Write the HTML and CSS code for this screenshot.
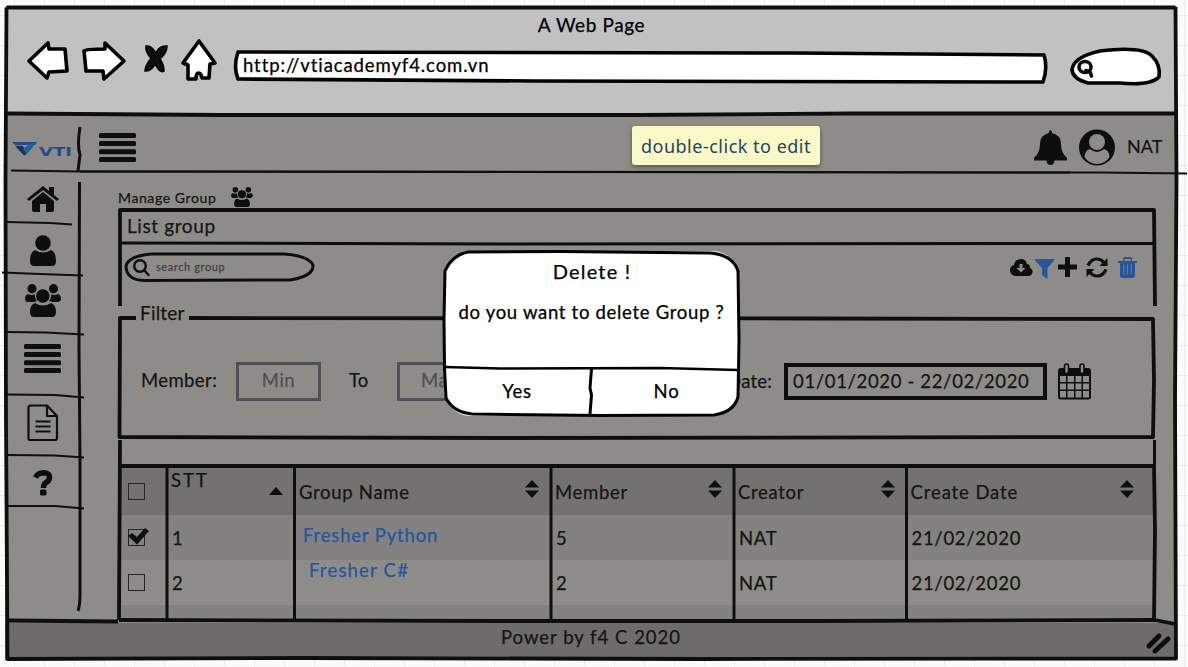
FILE: index.html
```html
<!DOCTYPE html>
<html lang="en">
<head>
<meta charset="utf-8">
<title>Manage Group</title>
<link rel="stylesheet" href="styles.css">
</head>
<body>
<svg class="symbols" width="0" height="0">
  <symbol id="users" viewBox="0 0 36 33">
    <circle cx="7" cy="4.700" r="4.600"/><circle cx="28.500" cy="4.700" r="4.600"/>
    <path d="M3 10Q7 12 9.500 10Q10 15 12 17Q9 18 8 18H3Q0 18 0 15Q0 11 3 10ZM33 10Q29 12 26.500 10Q26 15 24 17Q27 18 28 18H32Q36 18 36 15Q36 11 33 10Z"/>
    <circle cx="17.800" cy="12" r="6.800"/>
    <path d="M10 19Q17.800 24 26 19Q31 21 31 28Q31 33 27 33H9Q5 33 5 28Q5 21 10 19Z"/>
  </symbol>
  <symbol id="bars" viewBox="0 0 37 30">
    <rect width="37" height="5" rx="1.500"/><rect y="8" width="37" height="5" rx="1.500"/><rect y="16.300" width="37" height="5" rx="1.500"/><rect y="24" width="37" height="5" rx="1.500"/>
  </symbol>
  <symbol id="sort" viewBox="0 0 14 18"><path d="M7 0L14 7.500H0ZM0 10.500H14L7 18Z"/></symbol>
</svg>
<div class="window">
  <header class="chrome">
    <h1 class="page-title">A Web Page</h1>
    <div class="toolbar">
      <svg class="back" viewBox="0 0 42 40"><path class="white" d="M2 21L21 3L22 9L38 9L40 31L22 32L20 38Z"/></svg>
      <svg class="forward" viewBox="0 0 44 41"><path class="white" d="M2 11Q4 9 23 9L23 3L42 21L22 39L21 31L4 31Q3 20 2 11Z"/></svg>
      <svg class="stop" viewBox="0 0 26 30"><path stroke="#000" stroke-width="1.500" d="M3 3Q9 2 12.500 10Q17 2 24 3Q24 10 17 16Q21 22 21 28Q17 31 12 21Q8 29 2 28Q2 23 8 15Q2 9 3 3Z"/></svg>
      <svg class="homebtn" viewBox="0 0 36 43"><path class="white" d="M18 3L34 25L29 26L28 40H21Q20 35 17.500 35Q15 35 15 41H7V27L2 25Z"/></svg>
      <div class="url">
        <svg class="frame" viewBox="0 0 816 34"><path class="white" d="M4 2Q400 3 560 3L810 5Q814 18 809 32L300 31L4 29Q-1 17 4 2Z"/></svg>
        <span>http://vtiacademyf4.com.vn</span>
      </div>
      <svg class="lookup" viewBox="0 0 92 40"><path class="white" d="M30 4Q72-1 82 9Q91 18 89 30Q80 39 50 36L18 36Q3 32 2 23Q3 10 30 4Z"/><ellipse cx="15" cy="20" rx="6" ry="5.500" class="line heavy"/><path class="line heavy" d="M16 23.500L20 25L21.500 29"/></svg>
    </div>
  </header>

  <div class="appbar">
    <svg class="logo" viewBox="0 0 61 15"><path fill="#284a86" d="M0 1H25L23 4H3Z"/><path fill="#1f3054" d="M3 4.800H10L16 10L14 13.500Q12.500 15 11 13.500Z"/><path fill="#17678f" d="M25 1L15 13L11 8L17 3.500Z"/><text x="27" y="14.500" textLength="33" lengthAdjust="spacingAndGlyphs">VTI</text></svg>
    <svg class="burger"><use href="#bars"/></svg>
    <svg class="bell" viewBox="0 0 33 36"><path d="M15 1Q17-1 18 2V3Q27 5 27 14Q27 23 33 28V30.500H20.500Q20 35 16.500 35Q13 35 12.500 30.500H0V28Q6 23 6 14Q6 5 15 3Z"/></svg>
    <svg class="avatar" viewBox="0 0 36 37"><circle cx="18" cy="18.500" r="18"/><path fill="#8d8c89" d="M5.500 28Q6 21 11 20Q18 26 25 20Q30 21 30.500 28Q26 35 18 35Q10 35 5.500 28Z"/><circle cx="18" cy="13" r="8" fill="#8d8c89"/></svg>
    <span class="who">NAT</span>
  </div>

  <div class="body">
    <nav class="side">
      <a class="s1"><svg width="32" height="26" viewBox="0 0 32 26"><path d="M0 13L16 0L22 5V1H27V9L32 13L30 15L16 4L2 15Z"/><path d="M5 15L16 6L27 15V24Q27 26 25 26H19V18H13V26H7Q5 26 5 24Z"/></svg></a>
      <a class="s2"><svg width="26" height="31" viewBox="0 0 26 31"><circle cx="13" cy="8" r="7.800"/><path d="M5 15Q13 20 21 15Q26 17 26 26Q26 31 22 31H4Q0 31 0 26Q0 17 5 15Z"/></svg></a>
      <a class="s3"><svg width="36" height="33"><use href="#users"/></svg></a>
      <a class="s4"><svg width="37" height="30"><use href="#bars"/></svg></a>
      <a class="s5"><svg width="32" height="38" viewBox="0 0 32 38"><path class="thin" d="M3 1.500H20L30 12V34Q30 36 28 36H3Q1.500 36 1.500 34V3ZM20 2V12H30M8.500 17.500H23.500M8.500 22.500H23.500M8.500 27.500H23.500"/></svg></a>
      <a class="s6"><svg width="20" height="26" viewBox="0 0 20 26"><path fill="none" stroke="#0e0e0c" stroke-width="5.500" d="M1.500 7.500Q4 2.800 9.500 2.800Q16 3 15.500 8Q15 11 12 12.500Q9.500 14 9.500 18"/><rect x="6" y="19.500" width="6.500" height="6" rx="1.500"/></svg></a>
    </nav>
    <main class="main">
      <div class="crumb"><span>Manage Group</span><svg><use href="#users"/></svg></div>
      <section class="panel">
        <h2 class="panel-title">List group</h2>
        <div class="tools">
          <div class="search">
            <svg class="frame" viewBox="0 0 191 30"><path class="line" d="M28 2H160Q185 4 189 13Q190 24 166 28L20 28.500Q3 28 2 15Q3 4 28 2Z"/></svg>
            <svg class="mag" viewBox="0 0 17 17"><circle class="line" cx="7" cy="7" r="5.800"/><path class="line" d="M11 11L15.500 16"/></svg>
            <span>search group</span>
          </div>
          <div class="actions">
            <svg class="a1" viewBox="0 0 23 17"><path d="M5 17Q0 16 0 11Q0 7 4 6Q5 0 11 0Q16 0 17 5Q20 5 20 9Q23 10 22.500 13Q22 17 18 17Z"/><path fill="#8d8c89" d="M9.500 5H12.500V9H15.500L11 13.500L6.500 9H9.500Z"/></svg>
            <svg class="a2" viewBox="0 0 19 20"><path class="blue" d="M0 0H19V1.500L12.500 9V20L7 16V9L0 1.500Z"/></svg>
            <svg class="a3" viewBox="0 0 19 20"><path d="M7 0H12V7.500H19V12.500H12V20H7V12.500H0V7.500H7Z"/></svg>
            <svg class="a4" viewBox="0 0 22 21"><path fill="none" stroke="#0e0e0c" stroke-width="3.200" d="M2 8.500Q5 2 11 2Q15 2 18 5.500M20 12.500Q17 19 11 19Q7 19 4 15.500"/><path d="M21.500 1V9H13.500ZM.5 20V12H8.500Z"/></svg>
            <svg class="a5" viewBox="0 0 19 21"><path class="blue" fill-rule="evenodd" d="M0 4H5V2Q5 0 7 0H12Q14 0 14 2V4H19V6H17V18Q17 21 14.500 21H4.500Q2 21 2 18V6H0ZM6.500 4H12.500V2H6.500ZM5.500 7.500V17.500H6.200V7.500ZM9.200 7.500V17.500H9.900V7.500ZM12.800 7.500V17.500H13.500V7.500Z"/></svg>
          </div>
        </div>
        <div class="filter">
          <h3>Filter</h3>
          <div class="fields">
            <label class="l1">Member:</label><span class="box">Min</span><label class="l2">To</label><span class="box">Max</span>
            <label class="l3">Date:</label><span class="dates">01/01/2020 - 22/02/2020</span>
            <svg class="cal" viewBox="0 0 33 37"><path d="M3 5H30Q33 5 33 8V34Q33 36.500 30 36.500H3Q0 36.500 0 34V8Q0 5 3 5Z"/><path fill="#8d8c89" d="M2 13H8V19H2ZM9.500 13H16V19H9.500ZM17.500 13H23.500V19H17.500ZM25 13H31V19H25ZM2 20.500H8V26.500H2ZM9.500 20.500H16V26.500H9.500ZM17.500 20.500H23.500V26.500H17.500ZM25 20.500H31V26.500H25ZM2 28H8V34.500H2ZM9.500 28H16V34.500H9.500ZM17.500 28H23.500V34.500H17.500ZM25 28H31V34.500H25Z"/><g fill="#8d8c89" stroke="#0e0e0c" stroke-width="1.600"><rect x="6.500" y="1" width="4" height="9.500" rx="2"/><rect x="22" y="1" width="4" height="9.500" rx="2"/></g></svg>
          </div>
        </div>
        <div class="table">
          <div class="row head">
            <div><i class="check"></i></div>
            <div class="stt"><span>STT</span><svg class="up" viewBox="0 0 14 8"><path d="M7 0L14 8H0Z"/></svg></div>
            <div><span>Group Name</span><svg class="sort"><use href="#sort"/></svg></div>
            <div><span>Member</span><svg class="sort"><use href="#sort"/></svg></div>
            <div><span>Creator</span><svg class="sort"><use href="#sort"/></svg></div>
            <div><span class="cd">Create Date</span><svg class="sort last"><use href="#sort"/></svg></div>
          </div>
          <div class="row odd">
            <div><i class="check"><svg viewBox="0 0 22 18"><path d="M0 8L4 5L9 9L17 0L21 3L9 16.500Z"/></svg></i></div><div>1</div><div><a class="python">Fresher Python</a></div><div>5</div><div class="nat">NAT</div><div class="date">21/02/2020</div>
          </div>
          <div class="row">
            <div><i class="check"></i></div><div>2</div><div><a class="csharp">Fresher C#</a></div><div>2</div><div class="nat">NAT</div><div class="date">21/02/2020</div>
          </div>
          <div class="row odd rest"><div></div><div></div><div></div><div></div><div></div><div></div></div>
        </div>
      </section>
    </main>
  </div>
  <footer class="foot">Power by f4 C 2020</footer>
</div>

<svg class="ink" viewBox="0 0 1188 667">
  <g class="w4">
    <path d="M6.500 7.500H1175.500M6.500 7.500L5.500 180L6 420L7.500 659L300 658L700 659L1176 658.500L1175 400L1176.500 180L1175.500 7"/>
    <path d="M7 113.500L220 115L640 115L850 113.500H1175"/>
    <path d="M7 620.500L118 621.500"/><path d="M119 620L500 621L820 621L1155 620L1175 624"/>
    <path d="M120 306V210H1154L1155 306"/>
    <path d="M136 318H120L119.500 437L500 438L1153 437L1154 380L1153 319L800 318.500L189 318"/>
    <path d="M120 440L119 620M119 466H1154L1155 530L1154 620"/>
  </g>
  <g class="w3">
    <path d="M120 243L500 244L1154 243.500M1154.500 440V466"/>
    <path d="M79.500 182L79 350L80 460L80 595Q80 605 78 611M80 127Q77 145 80 155L78 171"/>
    <path d="M167 468V621M294.500 468V621M551 468V619M734 468V619M906.500 468V621"/>
  </g>
  <g class="w2">
    <path d="M11 170.500L80 171.500L400 171.500L1100 172.500L1187 173.500"/>
    <path d="M80 171.500L400 172L1070 172.500"/>
    <path d="M7 222L50 223L72 224.500M2 272.500L40 274L83 275.500M7 332L45 332.500L84 334.500M7 394.500L55 395L84 397.500M7 455L55 455.500L84 457.500M7 506L55 506L84 508.500"/>
  </g>
  <path d="M1149 646L1159 636M1155 651L1168 639" stroke="#0e0e0c" stroke-width="5" stroke-linecap="round"/>
</svg>

<div class="tip">double-click to edit</div>
<div class="dialog">
  <svg class="frame" viewBox="443 250 298 167">
    <rect x="444" y="251" width="295" height="165" rx="27" fill="#fff"/>
    <path fill="#fff" stroke="#000" stroke-width="3" d="M468 252L560 251.500L710 253Q733 255 738 271L739 340L738 397Q734 412 714 415L600 415.500L472 414Q453 412 446 398L444.500 368L444 320L445 271Q452 255 468 252Z"/>
    <path stroke="#000" stroke-width="2.400" fill="none" d="M445 367L500 368.500L660 368L738 370"/>
    <path stroke="#000" stroke-width="3" fill="none" d="M591.500 369L590 388L591.500 395L590 414"/>
  </svg>
  <h2><span>Delete !</span></h2>
  <p><span>do you want to delete Group ?</span></p>
  <div class="buttons"><b class="yes">Yes</b><b class="no">No</b></div>
</div>
</body>
</html>
```
FILE: styles.css
```css
* { box-sizing: border-box; }
body {
  margin: 0; padding: 6px 10px 6px 5px; width: 1188px; height: 667px; overflow: hidden; position: relative;
  font: 18.5px/24px Lato, "Open Sans", sans-serif; color: #151513;
  -webkit-text-stroke: .25px;
  background-color: #fbfbfb;
  background-image: linear-gradient(90deg, #eeeeee 1px, transparent 1px), linear-gradient(#eeeeee 1px, transparent 1px);
  background-size: 30px 30px; background-position: 14px 15px;
}
h1, h2, h3, p { margin: 0; font-weight: 400; font-size: inherit; }
b, i { font-weight: 400; font-style: normal; }
svg { display: block; flex: none; fill: #0e0e0c; overflow: visible; }
.symbols { position: absolute; }
.white { fill: #fff; stroke: #000; stroke-width: 3.6; stroke-linejoin: round; }
.line { fill: none; stroke: #0e0e0c; stroke-width: 3; stroke-linecap: round; }
.heavy { stroke-width: 3.6; }
.thin { fill: none; stroke: #0e0e0c; stroke-width: 2.2; stroke-linejoin: round; }
.blue { fill: #28559c; }
.frame { position: absolute; inset: 0; width: 100%; height: 100%; }

.window { width: 1172px; height: 654px; background: #8d8c89; display: flex; flex-direction: column; }
.chrome { height: 109px; background: #c1c1c1; padding-top: 7px; color: #000; }
.page-title { text-align: center; letter-spacing: .6px; font-size: 19px; padding-left: 1px; }
.toolbar { display: flex; height: 48px; margin-left: 22px; }
.back { width: 42px; height: 40px; margin-top: 3px; }
.forward { width: 44px; height: 41px; margin: 3px 0 0 13px; }
.stop { width: 26px; height: 30px; margin: 6px 0 0 17px; }
.homebtn { width: 36px; height: 43px; margin: 1px 0 0 12px; }
.url { position: relative; width: 816px; height: 34px; margin: 13px 0 0 17px; padding: 3px 9px; }
.url span { position: relative; letter-spacing: .9px; white-space: nowrap; }
.lookup { width: 92px; height: 40px; margin: 10px 0 0 20px; }

.appbar { height: 57px; flex: none; display: flex; align-items: center; padding: 8px 12px 0 7px; }
.logo { width: 61px; height: 15px; margin-top: 1px; }
.logo text { font: 700 13px "DejaVu Sans", sans-serif; fill: #284a86; letter-spacing: 0; -webkit-text-stroke: 0; }
.burger { width: 37px; height: 30px; margin-left: 26px; }
.bell { width: 33px; height: 36px; margin-left: auto; }
.avatar { width: 36px; height: 37px; margin-left: 12px; }
.who { margin-left: 12px; width: 38px; white-space: nowrap; margin-top: -3px; font-size: 18px; }

.body { flex: 1; min-height: 0; display: flex; }
.side { width: 75px; display: grid; grid-template-rows: 51px 50px 60px 62px 62px 51px; }
.side a { display: flex; justify-content: center; }
.s1 { padding-top: 14px; } .s2 { padding-top: 12px; } .s3 { padding: 11px 0 0 1px; }
.s4 { padding-top: 11px; } .s5 { padding-top: 9px; } .s6 { padding: 13px 0 0 3px; }
.main { width: 1037px; margin-left: 39px; }
.crumb { height: 38px; padding: 14px 0 0 0; margin-left: -1px; display: flex; font-size: 14px; }
.crumb span { width: 113px; letter-spacing: .6px; white-space: nowrap; }
.crumb svg { width: 22px; height: 20px; margin-top: 1px; }
.panel-title { height: 33px; padding: 4px 0 0 8px; letter-spacing: .6px; font-size: 19px; }
.tools { height: 75px; display: flex; justify-content: space-between; padding: 9px 19px 0 5px; }
.search { position: relative; width: 191px; height: 30px; display: flex; align-items: center; font-size: 11px; color: #3f3f43; letter-spacing: .6px; }
.mag { width: 17px; height: 17px; margin-left: 9px; }
.mag .line { stroke-width: 2.4; }
.search span { margin-left: 6px; white-space: nowrap; }
.actions { display: flex; padding-top: 5px; }
.a1 { width: 23px; height: 17px; margin-top: 2px; }
.a2 { width: 19px; height: 20px; margin: 2px 0 0 2px; }
.a3 { width: 19px; height: 20px; margin-left: 4px; }
.a4 { width: 22px; height: 21px; margin-left: 9px; }
.a5 { width: 19px; height: 21px; margin-left: 10px; }
.filter { display: flow-root; height: 149px; }
.filter h3 { height: 44px; padding-left: 21px; line-height: 22px; font-size: 19px; letter-spacing: .2px; margin-top: -16px; }
.fields { display: flex; align-items: center; height: 38px; padding-left: 22px; margin-top: 16px; white-space: nowrap; }
.l1 { width: 95px; letter-spacing: .4px; padding-bottom: 2px; }
.box { width: 85px; height: 39px; border: 3px solid #504f56; color: #504f56; text-align: center; line-height: 31px; letter-spacing: .5px; }
.l2 { width: 76px; padding: 0 0 2px 28px; }
.l3 { width: 302px; text-align: right; padding-right: 12px; letter-spacing: .2px; }
.dates { width: 263px; height: 37px; border: 4px solid #0e0e0c; line-height: 29px; padding-left: 5px; letter-spacing: .65px; }
.cal { width: 33px; height: 37px; margin-left: 11px; }

.table { width: 1035px; margin-left: 1px; }
.row { display: grid; grid-template-columns: 47px 128px 256px 183px 172.5px 1fr; height: 45px; }
.row > div { display: flex; align-items: center; padding-left: 5px; letter-spacing: .7px; white-space: nowrap; }
.row > div:first-child { padding-left: 8px; }
.head { height: 48px; background: #737270; }
.odd { background: #838280; }
.rest { height: 16px; }
.head > div { padding: 1px 0 0 4px; }
.head > div:first-child { padding-top: 1px; }
.head .stt { align-items: flex-start; padding-top: 1px; letter-spacing: 1.9px; }
.up { width: 14px; height: 8px; margin: 19px 12px 0 auto; }
.sort { width: 14px; height: 18px; margin: -6px 12px 0 auto; }
.cd { letter-spacing: .9px; }
.last { margin-right: 21px; }
.check { position: relative; width: 17px; height: 17px; border: 1.500px solid #252523; }
.check svg { position: absolute; left: -1px; top: -2px; width: 22px; height: 18px; }
.row a { color: #28559c; }
.python { padding: 0 0 5px 3px; letter-spacing: .85px; }
.csharp { padding-left: 9px; transform: translateY(-13px); letter-spacing: 1.2px; }
.foot { height: 37px; flex: none; background: #6d6c6a; text-align: center; padding-top: 2px; letter-spacing: 1px; }

.ink { position: absolute; left: 0; top: 0; width: 1188px; height: 667px; pointer-events: none; fill: none; }
.ink g { stroke: #0e0e0c; stroke-linejoin: round; }
.w4 { stroke-width: 3.8; } .w3 { stroke-width: 3; } .w2 { stroke-width: 2; }

.tip { position: absolute; left: 632px; top: 126px; width: 188px; height: 39px; border-radius: 3px; background: #f9f8c8; color: #24455a; font: 18px/40px "Noto Sans", sans-serif; letter-spacing: .5px; text-align: center; box-shadow: 0 2px 4px #0006; white-space: nowrap; -webkit-text-stroke: 0; }
.dialog { position: absolute; left: 443px; top: 250px; width: 298px; height: 167px; color: #000; text-align: center; white-space: nowrap; display: flex; flex-direction: column; }
.dialog h2 { height: 43px; padding-top: 9px; font-size: 20px; letter-spacing: 1.2px; }
.dialog p { height: 76px; padding-top: 7px; padding-right: 1px; letter-spacing: .7px; }
.dialog span, .dialog b { position: relative; }
.buttons { display: grid; grid-template-columns: 148px 151px; padding-top: 10px; letter-spacing: .8px; }
```
